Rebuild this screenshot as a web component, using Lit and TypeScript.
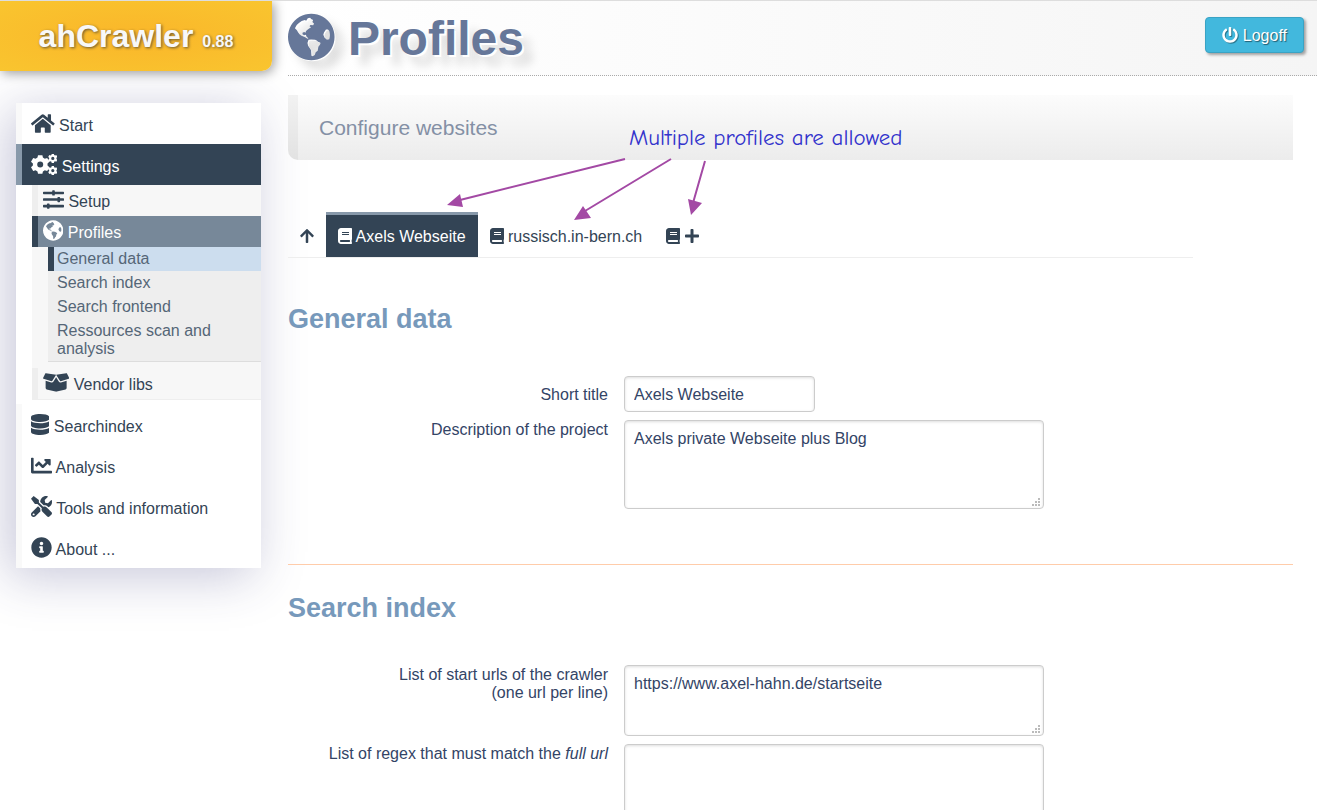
import { LitElement, html, svg, css } from "lit";
import { customElement } from "lit/decorators.js";

/** Outline of a toothed wheel with a round hole in its middle. */
function gear(cx: number, cy: number, outer: number, inner: number, hole: number, teeth: number): string {
  const step = (Math.PI * 2) / teeth;
  const points: string[] = [];
  for (let i = 0; i < teeth; i++) {
    const mid = i * step + step / 2;
    const corners: [number, number][] = [
      [-0.36, inner],
      [-0.22, outer],
      [0.22, outer],
      [0.36, inner],
    ];
    for (const [offset, radius] of corners) {
      const angle = mid + offset * step;
      points.push(`${(cx + radius * Math.cos(angle)).toFixed(2)} ${(cy + radius * Math.sin(angle)).toFixed(2)}`);
    }
  }
  return `M${points.join("L")}ZM${cx - hole} ${cy}a${hole} ${hole} 0 1 0 ${hole * 2} 0a${hole} ${hole} 0 1 0 ${-hole * 2} 0Z`;
}

interface Glyph {
  box: string;
  ratio: number;
  d: string;
}

const glyphs: Record<string, Glyph> = {
  home: {
    box: "0 0 576 512",
    ratio: 1.125,
    d: "M280.37 148.26L96 300.11V464a16 16 0 0 0 16 16l112.06-.29a16 16 0 0 0 15.92-16V368a16 16 0 0 1 16-16h64a16 16 0 0 1 16 16v95.64a16 16 0 0 0 16 16.05L464 480a16 16 0 0 0 16-16V300L295.67 148.26a12.19 12.19 0 0 0-15.3 0zM571.6 251.47L488 182.56V44.05a12 12 0 0 0-12-12h-56a12 12 0 0 0-12 12v72.61L318.47 43a48 48 0 0 0-61 0L4.34 251.47a12 12 0 0 0-1.6 16.9l25.5 31A12 12 0 0 0 45.15 301l235.22-193.74a12.19 12.19 0 0 1 15.3 0L530.9 301a12 12 0 0 0 16.9-1.6l25.5-31a12 12 0 0 0-1.7-16.93z",
  },
  cogs: {
    box: "0 0 26.25 21",
    ratio: 1.25,
    d: gear(9.2, 10.5, 9.6, 7.4, 3, 6) + gear(21.8, 4.4, 4.8, 3.7, 1.6, 6) + gear(21.8, 16.6, 4.8, 3.7, 1.6, 6),
  },
  sliders: {
    box: "0 0 512 512",
    ratio: 1,
    d: "M496 384H160v-16c0-8.8-7.2-16-16-16h-32c-8.8 0-16 7.2-16 16v16H16c-8.8 0-16 7.2-16 16v32c0 8.8 7.2 16 16 16h80v16c0 8.8 7.2 16 16 16h32c8.8 0 16-7.2 16-16v-16h336c8.8 0 16-7.2 16-16v-32c0-8.8-7.2-16-16-16zm0-160h-80v-16c0-8.8-7.2-16-16-16h-32c-8.8 0-16 7.2-16 16v16H16c-8.8 0-16 7.2-16 16v32c0 8.8 7.2 16 16 16h336v16c0 8.8 7.2 16 16 16h32c8.8 0 16-7.2 16-16v-16h80c8.8 0 16-7.2 16-16v-32c0-8.8-7.2-16-16-16zm0-160H288V48c0-8.8-7.2-16-16-16h-32c-8.8 0-16 7.2-16 16v16H16C7.2 64 0 71.2 0 80v32c0 8.8 7.2 16 16 16h208v16c0 8.8 7.2 16 16 16h32c8.8 0 16-7.2 16-16v-16h208c8.8 0 16-7.2 16-16V80c0-8.8-7.2-16-16-16z",
  },
  globe: {
    box: "12 13 141 145",
    ratio: 0.97,
    d: "M82.500 15a70.500 70.500 0 1 0 .01 0ZM33 59Q36 49 45 43Q53 35 63 34L67 36L72 29L79 27L82 31L88 34L86 40L91 45L88 50L80 49L77 53L82 56L76 60L69 65L66 69L65 73L61 70L56 73L56 77L61 80L66 79L68 84L74 90L71 91L64 86L53 82Q46 78 43 72Q40 64 33 59ZM74 94L82 93L94 94Q99 96 103 100L110 103Q112 106 104 115L102 127L96 132L93 140L87 144L83 142L82 126L73 112L71 104ZM127 63L133 63L137 67Q141 80 137 92L130 94L123 88L119 79L121 72Z",
  },
  box: {
    box: "0 0 640 512",
    ratio: 1.25,
    d: "M425.7 256c-16.9 0-32.8-9-41.4-23.4L320 126l-64.2 106.6c-8.7 14.5-24.6 23.5-41.5 23.5-4.5 0-9-.6-13.3-1.9L64 215v178c0 14.7 10 27.5 24.2 31l216.2 54.1c10.2 2.5 20.9 2.5 31 0L551.8 424c14.2-3.6 24.2-16.4 24.2-31V215l-137 39.1c-4.3 1.3-8.8 1.9-13.3 1.9zm212.6-112.2L586.8 41c-3.1-6.2-9.8-9.8-16.7-8.9L320 64l91.7 152.1c3.8 6.3 11.4 9.3 18.5 7.3l197.9-56.5c9.9-2.9 14.7-13.9 10.2-23.1zM53.2 41L1.7 143.8c-4.6 9.2.3 20.2 10.1 23l197.9 56.5c7.1 2 14.7-1 18.5-7.3L320 64 69.8 32.1c-6.9-.8-13.5 2.7-16.6 8.9z",
  },
  database: {
    box: "0 0 448 512",
    ratio: 0.875,
    d: "M448 73.143v45.714C448 159.143 347.667 192 224 192S0 159.143 0 118.857V73.143C0 32.857 100.333 0 224 0s224 32.857 224 73.143zM448 176v102.857C448 319.143 347.667 352 224 352S0 319.143 0 278.857V176c48.125 33.143 136.208 48.572 224 48.572S399.874 209.143 448 176zm0 160v102.857C448 479.143 347.667 512 224 512S0 479.143 0 438.857V336c48.125 33.143 136.208 48.572 224 48.572S399.874 369.143 448 336z",
  },
  chart: {
    box: "0 0 512 512",
    ratio: 1,
    d: "M496 384H64V80c0-8.84-7.16-16-16-16H16C7.16 64 0 71.16 0 80v336c0 17.67 14.33 32 32 32h464c8.84 0 16-7.16 16-16v-32c0-8.84-7.16-16-16-16zM464 96H345.94c-21.38 0-32.09 25.85-16.97 40.97l32.4 32.4L288 242.75l-73.37-73.37c-12.5-12.5-32.76-12.5-45.25 0l-68.69 68.69c-6.25 6.25-6.25 16.38 0 22.63l22.62 22.62c6.25 6.25 16.38 6.25 22.63 0L192 237.25l73.37 73.37c12.5 12.5 32.76 12.5 45.25 0l96-96 32.4 32.4c15.12 15.12 40.97 4.41 40.97-16.97V112c.01-8.84-7.15-16-15.99-16z",
  },
  tools: {
    box: "0 0 512 512",
    ratio: 1,
    d: "M501.1 395.7L384 278.6c-23.1-23.1-57.6-27.6-85.4-13.9L192 158.1V96L64 0 0 64l96 128h62.1l106.6 106.6c-13.6 27.8-9.2 62.3 13.9 85.4l117.1 117.1c14.6 14.6 38.2 14.6 52.7 0l52.7-52.7c14.5-14.6 14.5-38.2 0-52.7zM331.7 225c28.3 0 54.9 11 74.9 31l19.4 19.4c15.8-6.9 30.8-16.5 43.8-29.5 37.1-37.1 49.7-89.3 37.9-136.7-2.2-9-13.5-12.1-20.1-5.5l-74.4 74.4-67.9-11.3L334 98.9l74.4-74.4c6.6-6.6 3.4-17.9-5.7-20.2-47.4-11.7-99.6.9-136.6 37.9-28.5 28.5-41.9 66.1-41.2 103.6l82.1 82.1c8.1-1.9 16.5-2.9 24.7-2.9zm-103.9 82l-56.7-56.7L18.7 402.8c-25 25-25 65.5 0 90.5s65.5 25 90.5 0l123.6-123.6c-7.6-19.9-9.9-41.6-5-62.7zM64 472c-13.2 0-24-10.8-24-24 0-13.3 10.7-24 24-24s24 10.7 24 24c0 13.2-10.7 24-24 24z",
  },
  info: {
    box: "0 0 512 512",
    ratio: 1,
    d: "M256 8C119.043 8 8 119.083 8 256c0 136.997 111.043 248 248 248s248-111.003 248-248C504 119.083 392.957 8 256 8zm0 110c23.196 0 42 18.804 42 42s-18.804 42-42 42-42-18.804-42-42 18.804-42 42-42zm56 254c0 6.627-5.373 12-12 12h-88c-6.627 0-12-5.373-12-12v-24c0-6.627 5.373-12 12-12h12v-64h-12c-6.627 0-12-5.373-12-12v-24c0-6.627 5.373-12 12-12h64c6.627 0 12 5.373 12 12v100h12c6.627 0 12 5.373 12 12v24z",
  },
  book: {
    box: "0 0 448 512",
    ratio: 0.875,
    d: "M448 360V24c0-13.3-10.7-24-24-24H96C43 0 0 43 0 96v320c0 53 43 96 96 96h328c13.3 0 24-10.7 24-24v-16c0-7.5-3.5-14.3-8.9-18.7-4.2-15.4-4.2-59.3 0-74.7 5.4-4.3 8.9-11.1 8.9-18.6zM128 134c0-3.3 2.7-6 6-6h212c3.3 0 6 2.7 6 6v20c0 3.3-2.7 6-6 6H134c-3.3 0-6-2.7-6-6v-20zm0 64c0-3.3 2.7-6 6-6h212c3.3 0 6 2.7 6 6v20c0 3.3-2.7 6-6 6H134c-3.3 0-6-2.7-6-6v-20zm253.4 250H96c-17.7 0-32-14.3-32-32 0-17.6 14.4-32 32-32h285.4c-1.9 17.1-1.9 46.9 0 64z",
  },
  plus: {
    box: "0 0 448 512",
    ratio: 0.875,
    d: "M416 208H272V64c0-17.67-14.33-32-32-32h-32c-17.67 0-32 14.33-32 32v144H32c-17.67 0-32 14.33-32 32v32c0 17.67 14.33 32 32 32h144v144c0 17.67 14.33 32 32 32h32c17.67 0 32-14.33 32-32V304h144c17.67 0 32-14.33 32-32v-32c0-17.67-14.33-32-32-32z",
  },
  up: {
    box: "0 0 448 512",
    ratio: 0.875,
    d: "M34.9 289.5l-22.2-22.2c-9.4-9.4-9.4-24.6 0-33.9L207 39c9.4-9.4 24.6-9.4 33.9 0l194.3 194.3c9.4 9.4 9.4 24.6 0 33.9L413 289.4c-9.5 9.5-25 9.3-34.3-.4L264 168.6V456c0 13.3-10.7 24-24 24h-32c-13.3 0-24-10.7-24-24V168.6L69.2 289.1c-9.3 9.8-24.8 10-34.3.4z",
  },
  power: {
    box: "0 0 512 512",
    ratio: 1,
    d: "M400 54.1c63 45 104 118.6 104 201.9 0 136.8-110.8 247.7-247.5 248C120 504.3 8.2 393 8 256.4 7.9 173.1 48.9 99.3 111.8 54.2c11.7-8.3 28-4.8 35 7.7L162.6 90c5.9 10.5 3.1 23.8-6.6 31-41.5 30.8-68 79.6-68 134.9-.1 92.3 74.5 168.1 168 168.1 91.6 0 168.6-74.2 168-169.1-.3-51.8-24.7-101.8-68.1-134-9.7-7.2-12.4-20.5-6.5-30.9l15.8-28.1c7-12.4 23.2-16.1 34.8-7.8zM296 264V24c0-13.3-10.7-24-24-24h-32c-13.3 0-24 10.7-24 24v240c0 13.3 10.7 24 24 24h32c13.3 0 24-10.7 24-24z",
  },
};

function icon(name: string, size: number) {
  const g = glyphs[name];
  return html`<svg class="icon" aria-hidden="true" viewBox=${g.box} width=${g.ratio * size} height=${size}>
    ${svg`<path fill="currentColor" fill-rule="evenodd" d=${g.d}></path>`}
  </svg>`;
}

@customElement("app-nav")
class AppNav extends LitElement {
  static styles = css`
    :host {
      display: block;
      background: #fff;
      box-shadow: -8px 8px 48px rgba(50, 50, 120, 0.28);
    }
    ul {
      list-style: none;
      margin: 0;
      padding: 0;
    }
    a {
      display: block;
      color: #345;
      text-decoration: none;
      border-left: 6px solid #f9f9f9;
      padding: 4px 9px 0;
      line-height: 37px;
    }
    .icon {
      vertical-align: -3px;
    }
    .active {
      background: #345;
      color: #fff;
      border-color: #89a;
    }
    .second {
      margin: 0 0 4px 16px;
      background: #f7f7f7;
      border-bottom: 1px solid #eee;
    }
    .second a {
      border-color: #eee;
      padding: 3px 5px 0;
      line-height: 28px;
    }
    .second .active {
      background: #789;
      border-color: #345;
    }
    .second .third {
      margin: 0 0 6px 16px;
      background: #eee;
      border-bottom: 1px solid #ddd;
    }
    .second .third a {
      color: #567;
      padding: 3px 3px;
      line-height: 18px;
    }
    .second .third .active {
      background: #cde;
      border-color: #345;
    }
  `;

  render() {
    return html`<nav aria-label="Main">
      <ul>
        <li><a href="#start">${icon("home", 21)} Start</a></li>
        <li>
          <a class="active" href="#settings">${icon("cogs", 21)} Settings</a>
          <ul class="second">
            <li><a href="#setup">${icon("sliders", 21)} Setup</a></li>
            <li>
              <a class="active" href="#profiles">${icon("globe", 21)} Profiles</a>
              <ul class="third">
                <li><a class="active" href="#general">General data</a></li>
                <li><a href="#index">Search index</a></li>
                <li><a href="#frontend">Search frontend</a></li>
                <li><a href="#ressources">Ressources scan and analysis</a></li>
              </ul>
            </li>
            <li><a href="#vendor">${icon("box", 21)} Vendor libs</a></li>
          </ul>
        </li>
        <li><a href="#searchindex">${icon("database", 21)} Searchindex</a></li>
        <li><a href="#analysis">${icon("chart", 21)} Analysis</a></li>
        <li><a href="#tools">${icon("tools", 21)} Tools and information</a></li>
        <li><a href="#about">${icon("info", 21)} About ...</a></li>
      </ul>
    </nav>`;
  }
}

@customElement("app-root")
class AppRoot extends LitElement {
  static styles = css`
    :host {
      display: grid;
      grid-template-columns: 272px minmax(0, 1fr);
      column-gap: 16px;
      box-sizing: border-box;
      height: 100vh;
      overflow: hidden;
      border-top: 1px solid #ddd;
      background: #fff;
      color: #235;
      font: 16px/18px "Liberation Sans", Arial, sans-serif;
    }
    .brand {
      display: block;
      position: relative;
      height: 70px;
      line-height: 70px;
      text-align: center;
      font-size: 32px;
      font-weight: bold;
      color: #f8f8f8;
      text-decoration: none;
      text-shadow: 1px 1px 3px #653;
      background: radial-gradient(ellipse at center, #fab62a, #f9c52f);
      border-bottom-right-radius: 10px;
      box-shadow: 2px 2px 12px rgba(0, 0, 0, 0.4);
    }
    .version {
      font-size: 16px;
    }
    app-nav {
      margin: 32px 11px 0 16px;
    }
    .top {
      display: flex;
      justify-content: space-between;
      align-items: flex-start;
      height: 74px;
      padding-right: 13px;
      border-bottom: 1px dotted #aaa;
      background: linear-gradient(90deg, #fff, #f5f5f5);
    }
    h1 {
      margin: 0;
      font-size: 48px;
      line-height: 76px;
      color: #679;
      text-shadow: 2px 2px 0 #fff, 10px 10px 10px rgba(0, 0, 0, 0.15);
    }
    h1 .icon {
      vertical-align: -6px;
      filter: drop-shadow(1px 1px 0 #fff) drop-shadow(8px 8px 5px rgba(0, 0, 0, 0.13));
    }
    .logoff {
      margin-top: 16px;
      height: 36px;
      padding: 2px 16px 0;
      font: inherit;
      color: #fff;
      text-shadow: 1px 1px 1px rgba(0, 0, 0, 0.5);
      background: #42b8dd;
      border: 1px solid #3aa3c4;
      border-radius: 4px;
      box-shadow: 2px 2px 3px rgba(0, 0, 0, 0.35);
    }
    .logoff .icon,
    .tabs .icon {
      vertical-align: -2px;
    }
    .logoff .icon {
      filter: drop-shadow(1px 1px 0 rgba(0, 0, 0, 0.35));
    }
    main {
      position: relative;
      margin-right: 24px;
      padding-top: 19px;
    }
    .banner {
      margin: 0 0 52px;
      padding: 0 21px;
      border-left: 10px solid rgba(0, 0, 0, 0.04);
      border-bottom-left-radius: 10px;
      background: linear-gradient(#fcfcfc, #ececec) border-box;
      font-size: 21px;
      font-weight: normal;
      line-height: 65px;
      color: #8490a5;
    }
    .tabs {
      display: flex;
      width: 90%;
      border-bottom: 1px solid #eee;
    }
    .tab {
      padding: 2px 12px 0;
      border-top: 3px solid transparent;
      line-height: 40px;
      color: #345;
      text-decoration: none;
    }
    .tab.selected {
      background: #345;
      border-color: #89a;
      color: #fff;
    }
    h2 {
      margin: 45px 0 41px;
      font-size: 27px;
      line-height: 32px;
      color: #79b;
    }
    form {
      display: grid;
      grid-template-columns: 320px minmax(0, 1fr);
      gap: 8px 16px;
      align-items: start;
      justify-items: start;
    }
    label {
      justify-self: end;
      padding-top: 1px;
      text-align: right;
      color: #346;
    }
    .single {
      padding-top: 10px;
    }
    input,
    textarea {
      box-sizing: border-box;
      display: block;
      margin: 0;
      padding: 9px 9px 7px;
      border: 1px solid #ccc;
      border-radius: 4px;
      box-shadow: inset 0 1px 3px #ddd;
      background: #fff;
      font: inherit;
      color: #346;
    }
    input {
      width: 191px;
      height: 36px;
    }
    textarea {
      width: 420px;
      max-width: 100%;
      height: 89px;
      overflow: hidden;
    }
    .short {
      height: 71px;
    }
    textarea::-webkit-resizer {
      background: url("data:image/svg+xml,%3Csvg xmlns='http://www.w3.org/2000/svg' width='12' height='12' fill='%23bbb'%3E%3Cpath d='M7 2h2v2h-2zM4 5h2v2h-2zM7 5h2v2h-2zM1 8h2v2h-2zM4 8h2v2h-2zM7 8h2v2h-2z'/%3E%3C/svg%3E") no-repeat right bottom;
    }
    hr {
      margin: 55px 0 0;
      border: 0;
      border-top: 1px solid #fca;
    }
    hr + h2 {
      margin-top: 27px;
    }
    .note {
      position: absolute;
      left: 341px;
      top: 48px;
      font: 23px/28px "Comic Sans MS", "Comic Neue", cursive;
      color: #33c;
      white-space: nowrap;
    }
    .arrows {
      position: absolute;
      left: 152px;
      top: 76px;
      overflow: visible;
    }
  `;

  render() {
    return html`
      <aside>
        <a class="brand" href="#home">ahCrawler <span class="version">0.88</span></a>
        <app-nav></app-nav>
      </aside>
      <div>
        <header class="top">
          <h1>${icon("globe", 48)} Profiles</h1>
          <button class="logoff" type="button">${icon("power", 16)} Logoff</button>
        </header>
        <main>
          <div class="banner">Configure websites</div>
          <nav class="tabs" aria-label="Website profiles">
            <a class="tab" href="#top" aria-label="Up">${icon("up", 16)}</a>
            <a class="tab selected" href="#p1">${icon("book", 16)} Axels Webseite</a>
            <a class="tab" href="#p2">${icon("book", 16)} russisch.in-bern.ch</a>
            <a class="tab" href="#new" aria-label="Add profile">${icon("book", 16)} ${icon("plus", 16)}</a>
          </nav>
          <h2>General data</h2>
          <form>
            <label class="single" for="title">Short title</label>
            <input id="title" type="text" value="Axels Webseite" />
            <label for="description">Description of the project</label>
            <textarea id="description" .value=${"Axels private Webseite plus Blog"}></textarea>
          </form>
          <hr />
          <h2>Search index</h2>
          <form>
            <label for="urls">List of start urls of the crawler<br />(one url per line)</label>
            <textarea id="urls" class="short" .value=${"https://www.axel-hahn.de/startseite"}></textarea>
            <label for="regex">List of regex that must match the <em>full url</em></label>
            <textarea id="regex"></textarea>
          </form>
          <div class="note">Multiple profiles are allowed</div>
          <svg class="arrows" width="280" height="66" aria-hidden="true" fill="#a349a4" stroke="#a349a4">
            <path d="M185 7L20 48M231 7L145 59M265 9L253 51" fill="none" stroke-width="2" />
            <path d="M7 53L20 42L23 55ZM134 68L143 54L151 66ZM251 63L248 47L262 51Z" stroke="none" />
          </svg>
        </main>
      </div>
    `;
  }
}
